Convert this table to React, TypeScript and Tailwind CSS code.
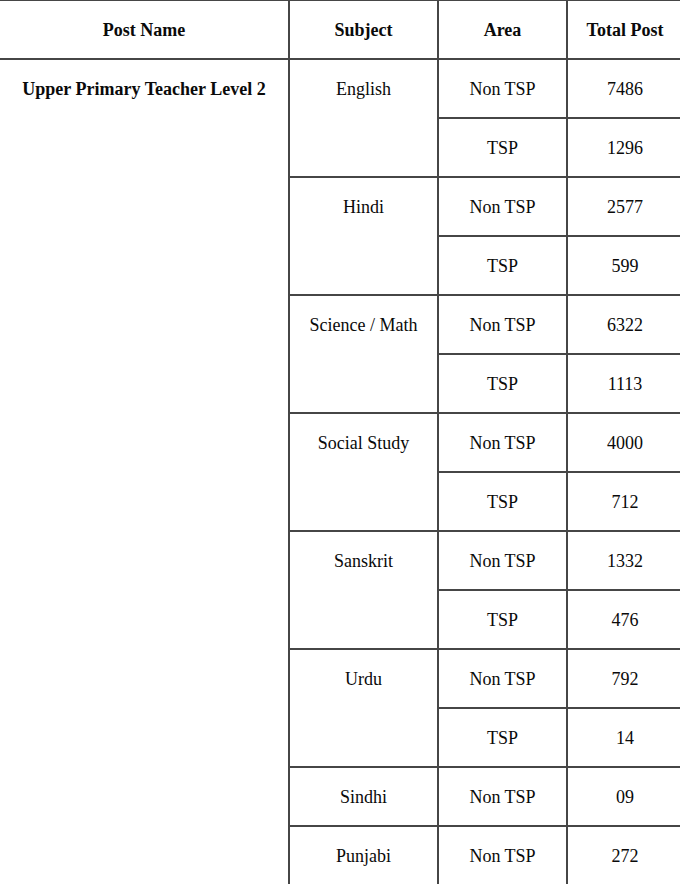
const rows: { subject: string; items: { area: string; total: string }[] }[] = [
  { subject: 'English', items: [{ area: 'Non TSP', total: '7486' }, { area: 'TSP', total: '1296' }] },
  { subject: 'Hindi', items: [{ area: 'Non TSP', total: '2577' }, { area: 'TSP', total: '599' }] },
  { subject: 'Science / Math', items: [{ area: 'Non TSP', total: '6322' }, { area: 'TSP', total: '1113' }] },
  { subject: 'Social Study', items: [{ area: 'Non TSP', total: '4000' }, { area: 'TSP', total: '712' }] },
  { subject: 'Sanskrit', items: [{ area: 'Non TSP', total: '1332' }, { area: 'TSP', total: '476' }] },
  { subject: 'Urdu', items: [{ area: 'Non TSP', total: '792' }, { area: 'TSP', total: '14' }] },
  { subject: 'Sindhi', items: [{ area: 'Non TSP', total: '09' }] },
  { subject: 'Punjabi', items: [{ area: 'Non TSP', total: '272' }] },
];

const totalRows = rows.reduce((n, r) => n + r.items.length, 0);

function App() {
  const cell = 'bg-white flex justify-center pt-[19px] leading-[21px]';
  const head = 'bg-white flex items-center justify-center pt-[2px] font-bold leading-[21px]';

  return (
    <div className="overflow-hidden w-[680px] bg-white">
      <div
        className="ml-[-2px] mt-[-1px] w-[686px] grid grid-cols-[288px_147px_127px_114px] auto-rows-[57px] gap-[2px] p-[2px] bg-[#464646] text-[18px] text-[#0a0a0a]"
        style={{ fontFamily: '"Liberation Serif", "Times New Roman", serif' }}
      >
        <div className={head}>Post Name</div>
        <div className={head}>Subject</div>
        <div className={head}>Area</div>
        <div className={head}>Total Post</div>

        <div className={`${cell} font-bold`} style={{ gridRow: `span ${totalRows}` }}>
          Upper Primary Teacher Level 2
        </div>
        {rows.map(r => (
          <>
            <div
              key={r.subject}
              className={cell}
              style={{ gridRow: `span ${r.items.length}` }}
            >
              {r.subject}
            </div>
            {r.items.map(it => (
              <>
                <div key={r.subject + it.area + 'a'} className={cell}>
                  {it.area}
                </div>
                <div key={r.subject + it.area + 't'} className={cell}>
                  {it.total}
                </div>
              </>
            ))}
          </>
        ))}
      </div>
    </div>
  );
}

export default App;
